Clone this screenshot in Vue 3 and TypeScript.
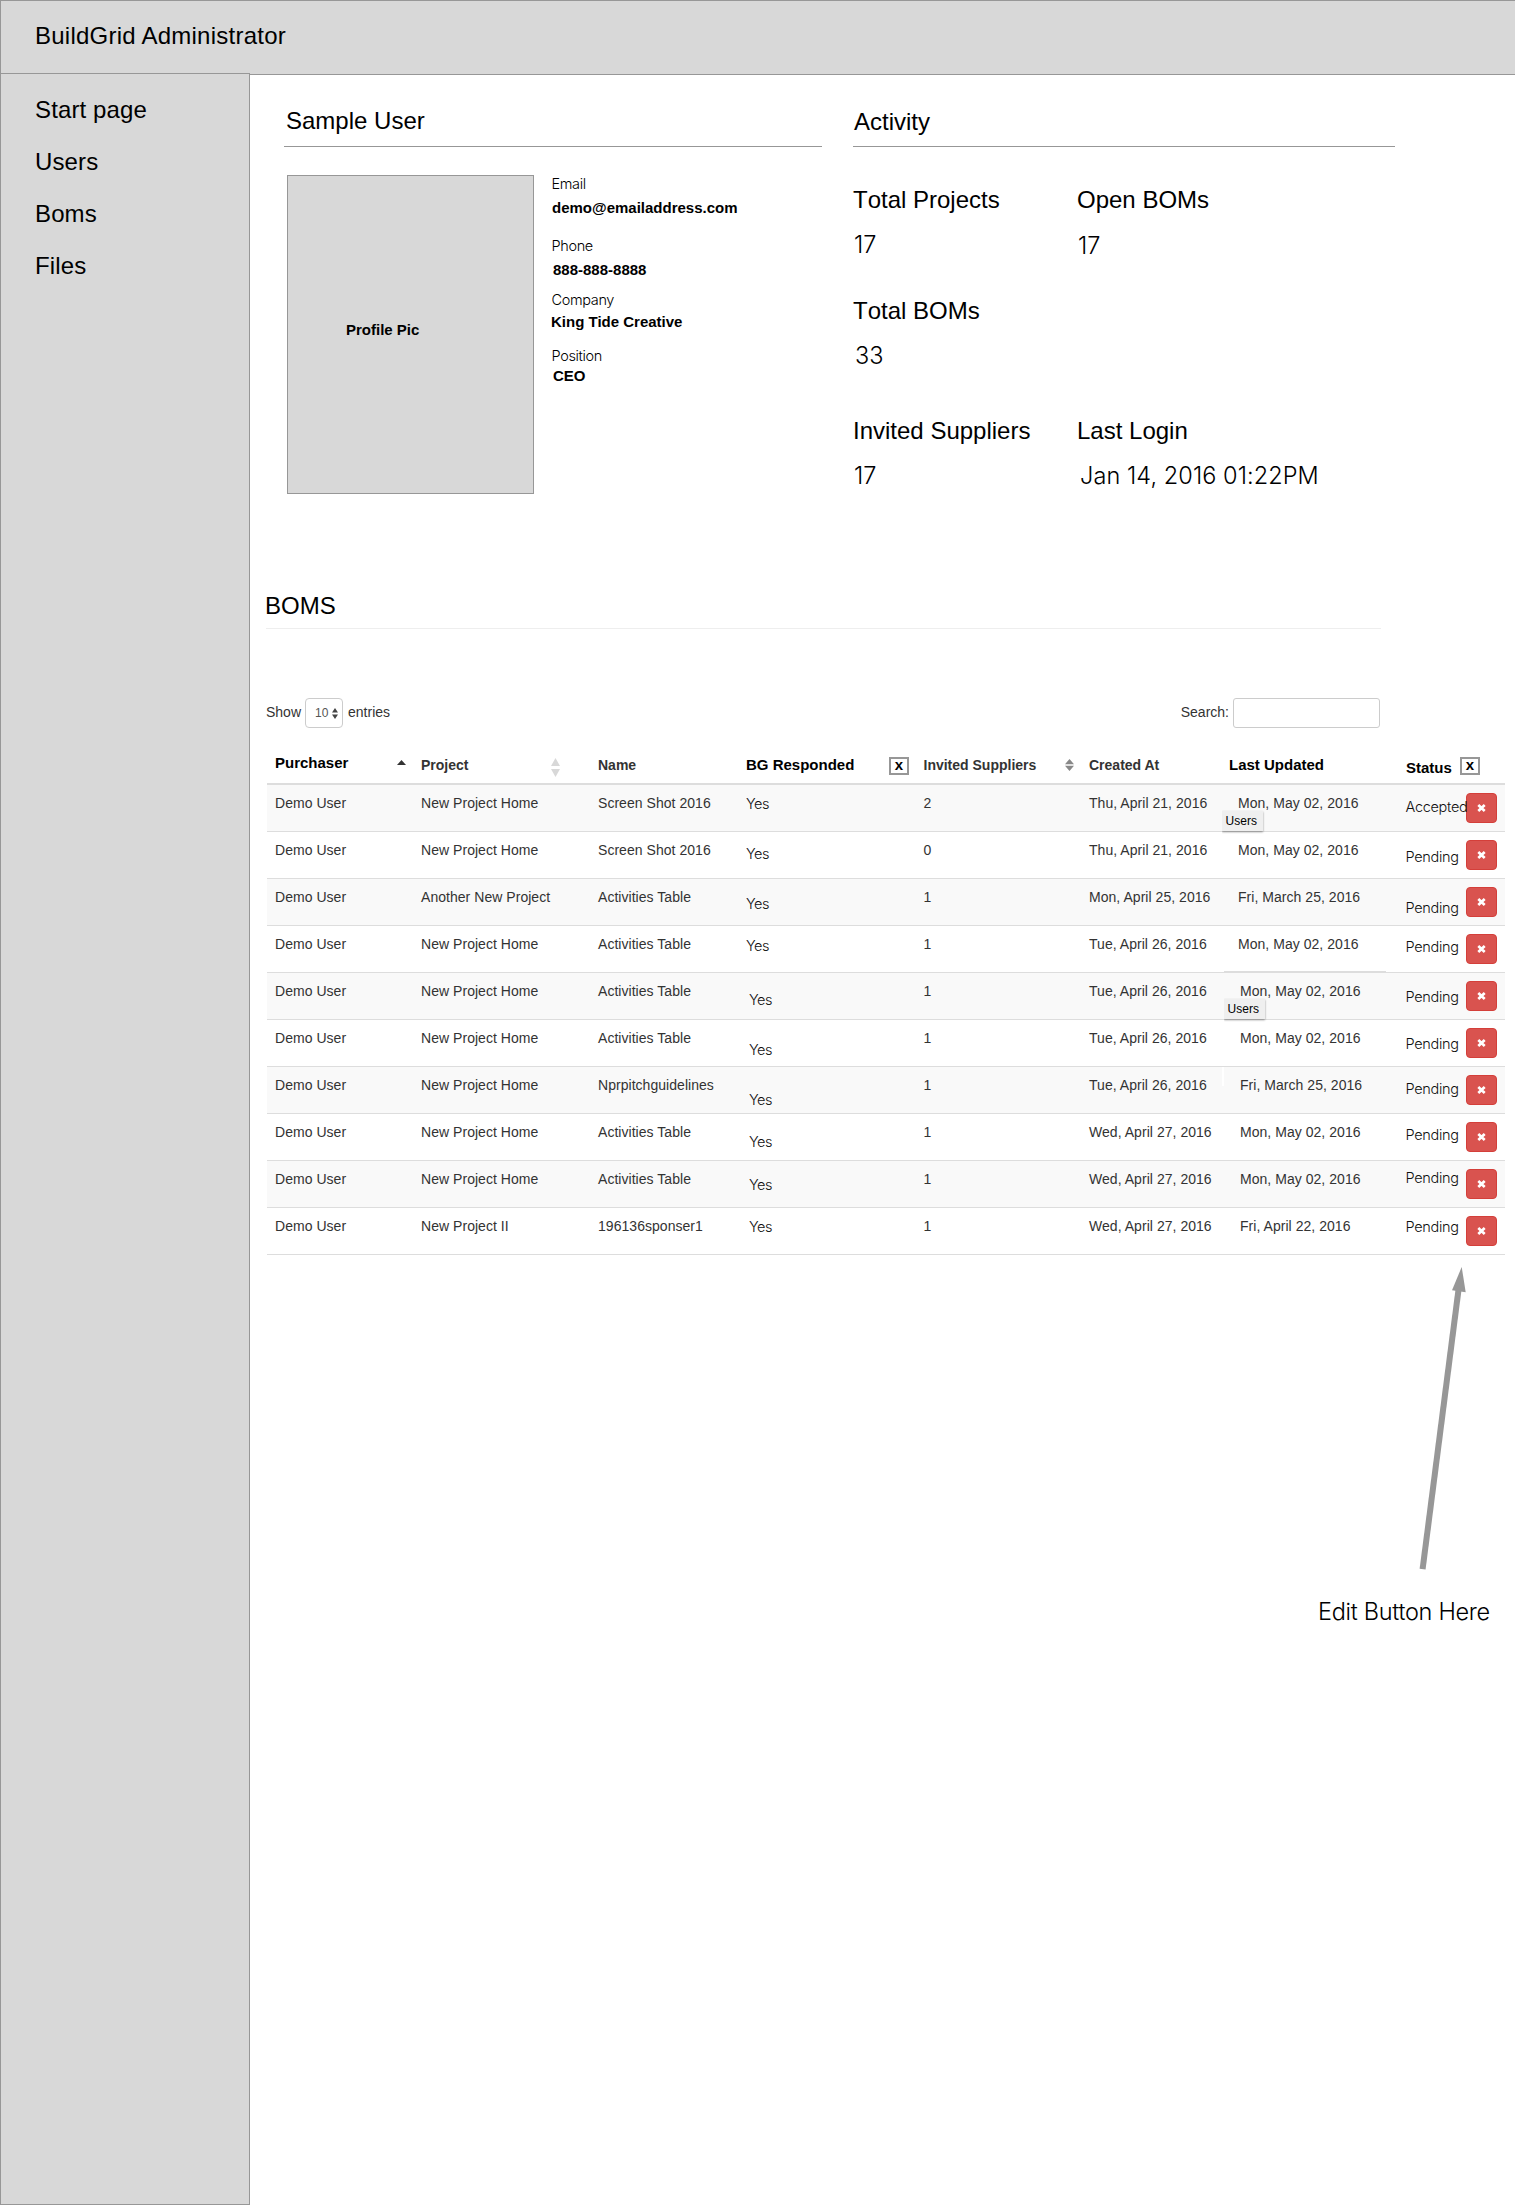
<script setup lang="ts">
interface Field { label: string; value: string; gap: number; space: number; indent: number }
interface Stat { label: string; value: string; gap: number; indent: number }
interface Bom {
  project: string
  name: string
  respondedTop: number
  suppliers: number
  created: string
  updated: string
  status: string
  statusTop: number
  tooltip?: string
}

const nav: string[] = ['Start page', 'Users', 'Boms', 'Files']

const fields: Field[] = [
  { label: 'Email', value: 'demo@emailaddress.com', gap: 7, space: 0, indent: 0 },
  { label: 'Phone', value: '888-888-8888', gap: 7, space: 21, indent: 1 },
  { label: 'Company', value: 'King Tide Creative', gap: 5, space: 13, indent: -1 },
  { label: 'Position', value: 'CEO', gap: 3, space: 17, indent: 1 },
]

const statRows: Stat[][] = [
  [
    { label: 'Total Projects', value: '17', gap: 18, indent: 0 },
    { label: 'Open BOMs', value: '17', gap: 19, indent: 0 },
  ],
  [{ label: 'Total BOMs', value: '33', gap: 18, indent: 1 }],
  [
    { label: 'Invited Suppliers', value: '17', gap: 18, indent: 0 },
    { label: 'Last Login', value: 'Jan 14, 2016 01:22PM', gap: 18, indent: 2 },
  ],
]

const rows: Bom[] = [
  { project: 'New Project Home', name: 'Screen Shot 2016', respondedTop: 10, suppliers: 2, created: 'Thu, April 21, 2016', updated: 'Mon, May 02, 2016', status: 'Accepted', statusTop: 13, tooltip: 'Users' },
  { project: 'New Project Home', name: 'Screen Shot 2016', respondedTop: 13, suppliers: 0, created: 'Thu, April 21, 2016', updated: 'Mon, May 02, 2016', status: 'Pending', statusTop: 16 },
  { project: 'Another New Project', name: 'Activities Table', respondedTop: 16, suppliers: 1, created: 'Mon, April 25, 2016', updated: 'Fri, March 25, 2016', status: 'Pending', statusTop: 20 },
  { project: 'New Project Home', name: 'Activities Table', respondedTop: 11, suppliers: 1, created: 'Tue, April 26, 2016', updated: 'Mon, May 02, 2016', status: 'Pending', statusTop: 12 },
  { project: 'New Project Home', name: 'Activities Table', respondedTop: 18, suppliers: 1, created: 'Tue, April 26, 2016', updated: 'Mon, May 02, 2016', status: 'Pending', statusTop: 15, tooltip: 'Users' },
  { project: 'New Project Home', name: 'Activities Table', respondedTop: 21, suppliers: 1, created: 'Tue, April 26, 2016', updated: 'Mon, May 02, 2016', status: 'Pending', statusTop: 15 },
  { project: 'New Project Home', name: 'Nprpitchguidelines', respondedTop: 24, suppliers: 1, created: 'Tue, April 26, 2016', updated: 'Fri, March 25, 2016', status: 'Pending', statusTop: 13 },
  { project: 'New Project Home', name: 'Activities Table', respondedTop: 19, suppliers: 1, created: 'Wed, April 27, 2016', updated: 'Mon, May 02, 2016', status: 'Pending', statusTop: 12 },
  { project: 'New Project Home', name: 'Activities Table', respondedTop: 15, suppliers: 1, created: 'Wed, April 27, 2016', updated: 'Mon, May 02, 2016', status: 'Pending', statusTop: 8 },
  { project: 'New Project II', name: '196136sponser1', respondedTop: 10, suppliers: 1, created: 'Wed, April 27, 2016', updated: 'Fri, April 22, 2016', status: 'Pending', statusTop: 10 },
]
</script>

<template>
  <div class="page">
    <header class="topbar">BuildGrid Administrator</header>
    <div class="body">
      <nav class="sidebar">
        <a v-for="item in nav" :key="item">{{ item }}</a>
      </nav>
      <main class="content">
        <div class="overview">
          <section class="profile">
            <h2>Sample User</h2>
            <div class="profile-body">
              <div class="picture"><span>Profile Pic</span></div>
              <dl class="fields">
                <div v-for="f in fields" :key="f.label" :style="{ marginTop: f.space + 'px' }">
                  <dt class="light">{{ f.label }}</dt>
                  <dd :style="{ marginTop: f.gap + 'px', marginLeft: f.indent + 'px' }">{{ f.value }}</dd>
                </div>
              </dl>
            </div>
          </section>
          <section class="activity">
            <h2>Activity</h2>
            <div v-for="(group, i) in statRows" :key="i" class="stat-row">
              <div v-for="s in group" :key="s.label" class="stat">
                <h3>{{ s.label }}</h3>
                <p class="light big" :style="{ marginTop: s.gap + 'px', marginLeft: s.indent + 'px' }">{{ s.value }}</p>
              </div>
            </div>
          </section>
        </div>

        <h2 class="boms-title">BOMS</h2>

        <div class="controls">
          <label class="length">
            Show
            <span class="select">10
              <svg width="6" height="11" viewBox="0 0 6 11"><path d="M3 0 6 4.6H0zM3 11 0 6.4h6z" fill="#444" /></svg>
            </span>
            entries
          </label>
          <label class="search">Search:<input type="text" /></label>
        </div>

        <div class="table">
          <div class="row head">
            <div class="cell strong purchaser">Purchaser
              <svg width="9" height="5" viewBox="0 0 9 5"><path d="M4.5 0 9 5H0z" fill="#333" /></svg>
            </div>
            <div class="cell project">Project
              <svg width="9" height="19" viewBox="0 0 9 19"><path d="M4.5 0 9 8H0zM4.5 19 0 11h9z" fill="#d8d8d8" /></svg>
            </div>
            <div class="cell">Name</div>
            <div class="cell strong responded-head">BG Responded <span class="xbox">x</span></div>
            <div class="cell invited">Invited Suppliers
              <svg width="9" height="12" viewBox="0 0 9 12"><path d="M4.5 0 9 5.2H0zM4.5 12 0 6.8h9z" fill="#888" /></svg>
            </div>
            <div class="cell">Created At</div>
            <div class="cell strong updated-head">Last Updated</div>
            <div class="cell strong status-head">Status <span class="xbox">x</span></div>
          </div>
          <div v-for="(r, i) in rows" :key="i" class="row" :class="{ shifted: i > 3, patch: i === 3, seam: i === 6 }">
            <div class="cell">Demo User</div>
            <div class="cell">{{ r.project }}</div>
            <div class="cell">{{ r.name }}</div>
            <div class="cell light yes" :style="{ paddingTop: r.respondedTop + 'px' }">Yes</div>
            <div class="cell">{{ r.suppliers }}</div>
            <div class="cell">{{ r.created }}</div>
            <div class="cell updated">{{ r.updated }}<span v-if="r.tooltip" class="tooltip">{{ r.tooltip }}</span></div>
            <div class="cell light status" :style="{ paddingTop: r.statusTop + 'px' }">{{ r.status }}</div>
            <button class="remove" type="button">
              <svg width="9" height="8" viewBox="0 0 9 8"><path d="M1.3 1 7.7 7M7.7 1 1.3 7" stroke="#fff" stroke-width="2.7" /></svg>
            </button>
          </div>
        </div>

        <div class="note">
          <svg width="60" height="310" viewBox="0 0 60 310">
            <path d="M11.6 307.2 47.6 27" stroke="#979797" stroke-width="6" />
            <path d="M50.7 5 54.7 30.2 41 28.3z" fill="#979797" />
          </svg>
          <p class="light big">Edit Button Here</p>
        </div>
      </main>
    </div>
  </div>
</template>

<style>
body { margin: 0; background: #fff; }
</style>

<style scoped>
.page {
  width: 1515px;
  height: 2207px;
  overflow: hidden;
  font-family: "Liberation Sans", Arial, sans-serif;
  font-size: 24px;
  line-height: 27px;
  color: #000;
}
.page * { box-sizing: border-box; }
h2, h3, p, dl, dd { margin: 0; font-weight: normal; font-size: inherit; }
.topbar {
  box-sizing: border-box;
  width: 1520px;
  height: 75px;
  padding: 21px 34px 0;
  background: #d8d8d8;
  border: 1px solid #979797;
  letter-spacing: 0.24px;
}
.body { display: flex; }
.sidebar {
  display: flex;
  flex-direction: column;
  gap: 25px;
  width: 250px;
  height: 2132px;
  margin-top: -2px;
  padding: 22px 34px 0;
  background: #d8d8d8;
  border: 1px solid #979797;
  letter-spacing: 0.12px;
  flex: none;
}
.content { flex: 1; min-width: 0; }
.light {
  font-family: Inter, "Liberation Sans", sans-serif;
  font-weight: 300;
  font-size: 14.5px;
  line-height: 17px;
  letter-spacing: -0.35px;
  white-space: nowrap;
}
.big { font-size: 23.5px; line-height: 27px; letter-spacing: 0.08px; }
.overview { display: flex; gap: 31px; height: 510px; padding-left: 34px; }
.profile { width: 538px; }
.activity { width: 542px; }
.overview h2 { height: 72px; padding: 32px 0 0 2px; border-bottom: 1px solid #979797; }
.activity h2 { padding: 33px 0 0 1px; }
.profile-body { display: flex; padding: 28px 0 0 3px; }
.picture {
  width: 247px;
  height: 319px;
  padding: 145px 0 0 58px;
  background: #d8d8d8;
  border: 1px solid #979797;
  font: bold 15px/17px "Liberation Sans", Arial, sans-serif;
}
.fields { padding-left: 17.5px; font-size: 15px; line-height: 17px; }
.fields dd { font-weight: bold; padding-left: 0.5px; }
.stat-row { display: flex; height: 111px; }
.activity h2 + .stat-row { margin-top: 39px; }
.stat-row:last-child { margin-top: 9px; }
.stat { width: 224px; white-space: nowrap; }
.stat h3 { font-kerning: none; }
.stat .big { padding-left: 1px; }
.boms-title { width: 1115px; height: 44px; margin-left: 16px; padding-top: 7px; border-bottom: 1px solid #eee; text-indent: -1px; }
.controls {
  display: flex;
  justify-content: space-between;
  width: 1114px;
  height: 30px;
  margin: 69px 0 0 16px;
  font-size: 14px;
  line-height: 28px;
  color: #333;
}
.length, .search { display: flex; align-items: flex-start; }
.select {
  display: flex;
  align-items: center;
  justify-content: space-between;
  width: 38px;
  height: 30px;
  margin: 0 5px 0 4px;
  padding: 0 4px 0 9px;
  border: 1px solid #ccc;
  border-radius: 4px;
  font-size: 12px;
  color: #555;
  background: #fff;
}
.search input { width: 147px; height: 30px; margin-left: 4px; border: 1px solid #ccc; border-radius: 3px; padding: 0; }
.table { width: 1238px; margin: 17px 0 0 17px; font-size: 14px; line-height: 16px; color: #333; }
.row {
  display: grid;
  grid-template-columns: 146px 177px 148px 177.5px 165.5px 133px 184px 60px 31px;
  height: 47px;
  padding: 0 8px;
  border-bottom: 1px solid #ddd;
  position: relative;
}
.row:nth-child(even) { background: #f9f9f9; }
.cell { padding-top: 10px; white-space: nowrap; position: relative; letter-spacing: 0.04px; }
.cell.light { color: #111; z-index: 1; letter-spacing: -0.35px; }
.cell.yes { letter-spacing: -0.45px; }
.cell.status { margin-left: -0.5px; letter-spacing: -0.3px; }
.head { height: 40px; border-bottom: 2px solid #ddd; font-weight: bold; }
.head .cell { display: flex; align-items: flex-start; padding-top: 12px; letter-spacing: 0; }
.head .strong { font-size: 15px; line-height: 17px; color: #000; padding-top: 11px; }
.head .purchaser { padding-top: 9px; justify-content: space-between; padding-right: 15.5px; }
.purchaser svg { margin-top: 6px; }
.project { justify-content: space-between; padding-right: 38px; }
.project svg { margin-top: 1px; }
.responded-head { justify-content: space-between; padding-right: 14.5px; }
.invited { justify-content: space-between; padding-right: 15.5px; }
.invited svg { margin-top: 2px; }
.head .updated-head { padding-left: 7px; }
.head .status-head { padding-top: 14px; }
.xbox {
  flex: none;
  width: 20px;
  height: 18px;
  margin-top: 1px;
  border: 2px solid #979797;
  background: #fff;
  text-align: center;
  line-height: 12px;
}
.status-head .xbox { margin: -2px 0 0 8px; }
.updated { padding-left: 16px; }
.shifted .updated { padding-left: 18px; }
.shifted .yes { padding-left: 3px; }
.tooltip {
  position: absolute;
  left: 0;
  top: 26px;
  width: 41px;
  height: 20px;
  padding-left: 3.5px;
  background: #efefef;
  box-shadow: 0 1px 2px rgba(0, 0, 0, 0.4);
  clip-path: inset(-2px -4px -3px 0);
  font-size: 12px;
  line-height: 21px;
  color: #000;
}
.shifted .tooltip { left: 2px; }
.patch .updated::after {
  content: "";
  position: absolute;
  left: 2px;
  bottom: 0;
  width: 162px;
  height: 1px;
  background: #ddd;
}
.seam .updated::after {
  content: "";
  position: absolute;
  left: 0;
  top: 0;
  width: 2px;
  height: 19px;
  background: #fff;
}
.remove {
  display: flex;
  align-items: center;
  justify-content: center;
  width: 31px;
  height: 30px;
  margin-top: 8px;
  padding: 0;
  background: #d9534f;
  border: 1px solid #d43f3a;
  border-radius: 4px;
}
.note { margin: 7px 0 0 1068px; }
.note svg { display: block; margin-left: 93px; }
.note p { margin-top: 26px; letter-spacing: -0.3px; }
</style>
